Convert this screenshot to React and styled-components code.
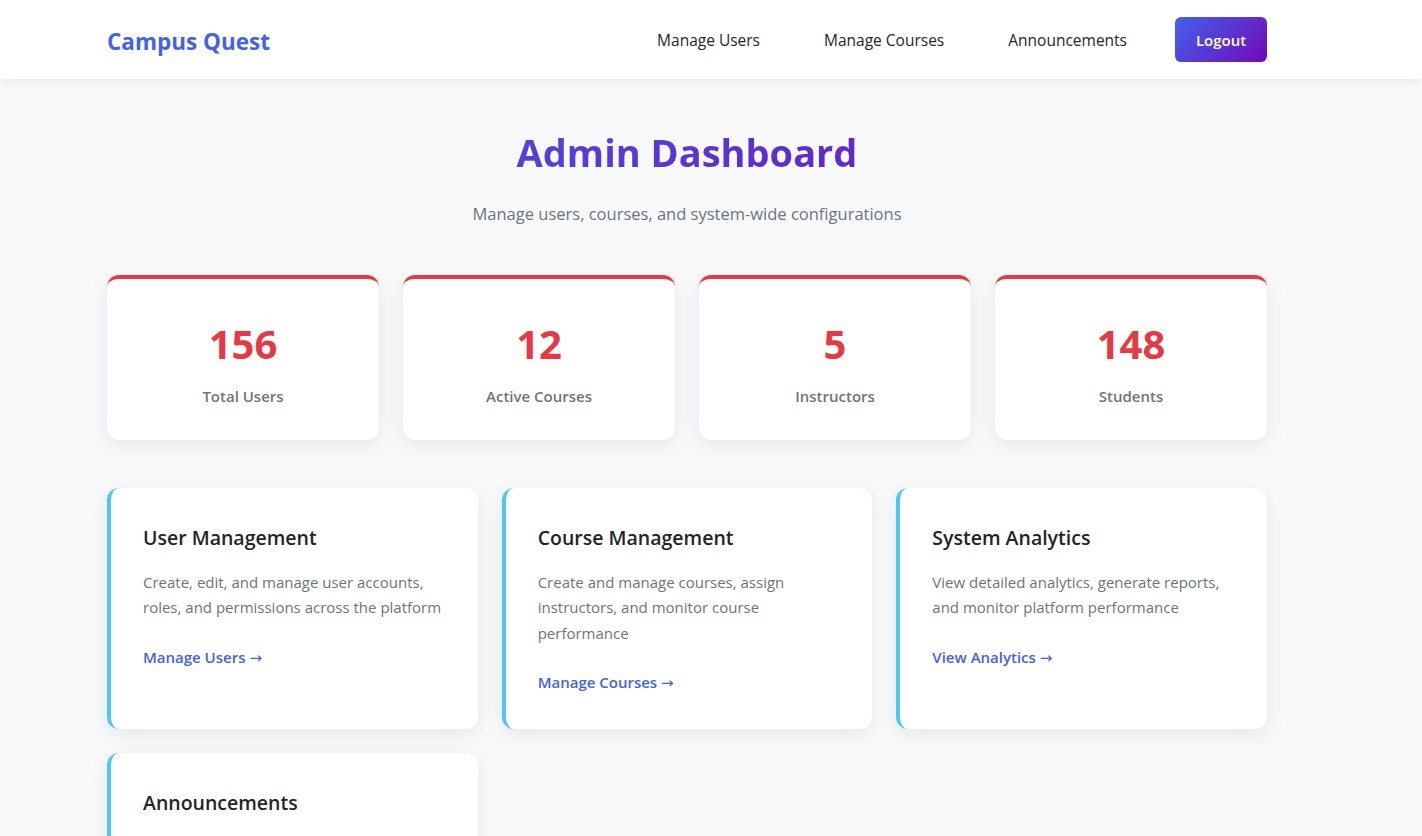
import React from "react";
import styled, { createGlobalStyle } from "styled-components";

const Global = createGlobalStyle`
  * { box-sizing: border-box; }
  body {
    margin: 0;
    background: #f8f9fa;
    font-family: "Open Sans", "Noto Sans", sans-serif;
    color: #212529;
  }
`;

const Header = styled.header`
  background: #ffffff;
  box-shadow: 0 2px 10px rgba(0, 0, 0, 0.08);
`;

const Container = styled.div`
  width: 1160px;
  max-width: calc(100% - 40px);
  margin-left: max(20px, calc(50% - 604px));
`;

const NavBar = styled(Container)`
  height: 79px;
  display: flex;
  align-items: center;
  justify-content: space-between;
`;

const Logo = styled.div`
  font-size: 22.5px;
  font-weight: 700;
  color: #4361ee;
  padding-top: 3px;
`;

const NavLinks = styled.nav`
  display: flex;
  align-items: center;
  gap: 32px;
`;

const NavLink = styled.a`
  font-size: 15.5px;
  font-weight: 500;
  color: #262626;
  text-decoration: none;
  padding: 8px 0;
  margin: 0 16px 0 16px;
  &:first-child { margin-left: 0; }
  &:last-of-type { margin-right: 0; }
`;

const LogoutButton = styled.button`
  font-family: inherit;
  font-size: 15px;
  font-weight: 600;
  color: #fff;
  border: none;
  border-radius: 6px;
  width: 92px;
  height: 45px;
  background: linear-gradient(135deg, #4361ee, #7209b7);
  margin-left: 16px;
`;

const Main = styled(Container)`
  padding-top: 51px;
  padding-bottom: 40px;
`;

const Title = styled.h1`
  margin: 0;
  text-align: center;
  font-size: 38px;
  font-weight: 700;
  line-height: 1.2;
  background: linear-gradient(135deg, #4361ee, #7209b7);
  -webkit-background-clip: text;
  background-clip: text;
  color: transparent;
`;

const Subtitle = styled.p`
  margin: 26px 0 0;
  text-align: center;
  font-size: 16.5px;
  color: #6c757d;
`;

const StatsGrid = styled.div`
  margin-top: 50px;
  display: grid;
  grid-template-columns: repeat(4, 1fr);
  gap: 24px;
`;

const StatCard = styled.div`
  background: #fff;
  border-radius: 12px;
  border-top: 4px solid #e63946;
  box-shadow: 0 5px 20px rgba(0, 0, 0, 0.08);
  height: 165px;
  display: flex;
  flex-direction: column;
  align-items: center;
  justify-content: center;
  padding-top: 8px;
`;

const StatNumber = styled.div`
  font-size: 40px;
  font-weight: 700;
  color: #e63946;
  line-height: 1.2;
`;

const StatLabel = styled.div`
  margin-top: 18px;
  font-size: 15px;
  font-weight: 600;
  color: #6c757d;
`;

const FeatureGrid = styled.div`
  margin-top: 48px;
  display: grid;
  grid-template-columns: repeat(3, 1fr);
  gap: 24px;
`;

const FeatureCard = styled.div`
  background: #fff;
  border-radius: 12px;
  border-left: 4px solid #4cc9f0;
  box-shadow: 0 5px 20px rgba(0, 0, 0, 0.08);
  padding: 34px 32px 32px;
`;

const FeatureTitle = styled.h3`
  margin: 0;
  font-size: 19.5px;
  font-weight: 600;
  line-height: 1.6;
  color: #212529;
`;

const FeatureText = styled.p`
  margin: 17px 0 0;
  font-size: 15px;
  line-height: 1.7;
  color: #6c757d;
`;

const FeatureLink = styled.a`
  display: inline-block;
  margin-top: 24px;
  font-size: 15px;
  font-weight: 600;
  line-height: 1.7;
  color: #4361ee;
  text-decoration: none;
`;

const Arrow = styled.span`
  font-family: "DejaVu Sans", sans-serif;
  font-weight: 400;
  font-size: 15px;
`;

const stats = [
  { n: "156", l: "Total Users" },
  { n: "12", l: "Active Courses" },
  { n: "5", l: "Instructors" },
  { n: "148", l: "Students" },
];

const features = [
  {
    t: "User Management",
    d: "Create, edit, and manage user accounts, roles, and permissions across the platform",
    l: "Manage Users",
  },
  {
    t: "Course Management",
    d: "Create and manage courses, assign instructors, and monitor course performance",
    l: "Manage Courses",
  },
  {
    t: "System Analytics",
    d: "View detailed analytics, generate reports, and monitor platform performance",
    l: "View Analytics",
  },
  {
    t: "Announcements",
    d: "Create and publish system-wide announcements for students and instructors",
    l: "Manage Announcements",
  },
];

export default function App() {
  return (
    <>
      <Global />
      <Header>
        <NavBar>
          <Logo>Campus Quest</Logo>
          <NavLinks>
            <NavLink href="#">Manage Users</NavLink>
            <NavLink href="#">Manage Courses</NavLink>
            <NavLink href="#">Announcements</NavLink>
            <LogoutButton>Logout</LogoutButton>
          </NavLinks>
        </NavBar>
      </Header>
      <Main>
        <Title>Admin Dashboard</Title>
        <Subtitle>Manage users, courses, and system-wide configurations</Subtitle>
        <StatsGrid>
          {stats.map((s) => (
            <StatCard key={s.l}>
              <StatNumber>{s.n}</StatNumber>
              <StatLabel>{s.l}</StatLabel>
            </StatCard>
          ))}
        </StatsGrid>
        <FeatureGrid>
          {features.map((f) => (
            <FeatureCard key={f.t}>
              <FeatureTitle>{f.t}</FeatureTitle>
              <FeatureText>{f.d}</FeatureText>
              <FeatureLink href="#">
                {f.l} <Arrow>→</Arrow>
              </FeatureLink>
            </FeatureCard>
          ))}
        </FeatureGrid>
      </Main>
    </>
  );
}
